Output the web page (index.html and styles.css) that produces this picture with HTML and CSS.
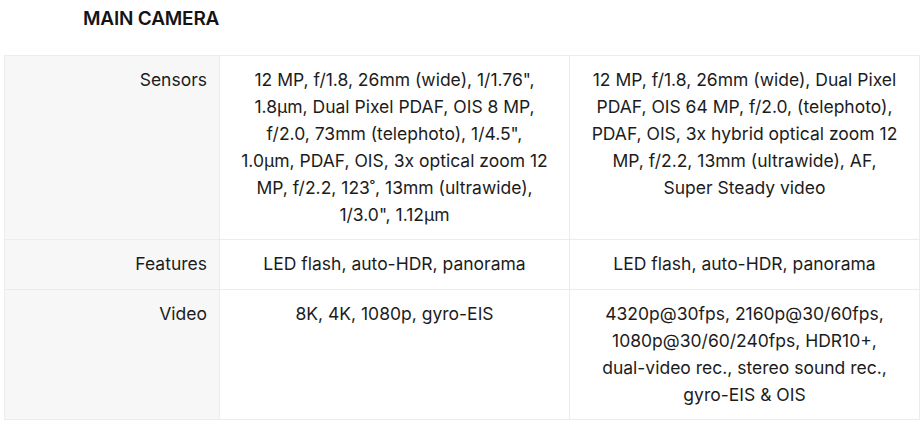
FILE: index.html
```html
<!DOCTYPE html>
<html>
<head>
<meta charset="utf-8">
<link rel="stylesheet" href="styles.css">
</head>
<body>
<div class="section">
  <h2 class="title">MAIN CAMERA</h2>
  <table class="specs">
    <colgroup>
      <col class="c-label">
      <col class="c-val">
      <col class="c-val">
    </colgroup>
    <tr>
      <th>Sensors</th>
      <td>12 MP, f/1.8, 26mm (wide), 1/1.76",<br>1.8µm, Dual Pixel PDAF, OIS 8 MP,<br>f/2.0, 73mm (telephoto), 1/4.5",<br>1.0µm, PDAF, OIS, 3x optical zoom 12<br>MP, f/2.2, 123˚, 13mm (ultrawide),<br>1/3.0", 1.12µm</td>
      <td>12 MP, f/1.8, 26mm (wide), Dual Pixel<br>PDAF, OIS 64 MP, f/2.0, (telephoto),<br>PDAF, OIS, 3x hybrid optical zoom 12<br>MP, f/2.2, 13mm (ultrawide), AF,<br>Super Steady video</td>
    </tr>
    <tr class="single">
      <th>Features</th>
      <td>LED flash, auto-HDR, panorama</td>
      <td>LED flash, auto-HDR, panorama</td>
    </tr>
    <tr>
      <th>Video</th>
      <td>8K, 4K, 1080p, gyro-EIS</td>
      <td>4320p@30fps, 2160p@30/60fps,<br>1080p@30/60/240fps, HDR10+,<br>dual-video rec., stereo sound rec.,<br>gyro-EIS &amp; OIS</td>
    </tr>
  </table>
</div>
</body>
</html>
```
FILE: styles.css
```css
html, body {
  margin: 0;
  padding: 0;
  background: #ffffff;
}
body {
  font-family: Inter, "Liberation Sans", sans-serif;
  color: #1c1c1c;
}
.section {
  padding: 4px 4px 0 4px;
}
.title {
  margin: 0 0 0 79px;
  font-size: 19px;
  font-weight: 600;
  line-height: 30px;
  height: 51px;
  letter-spacing: -0.2px;
  color: #141414;
}
.specs {
  border-collapse: collapse;
  width: 916px;
  table-layout: fixed;
  font-size: 17.5px;
  line-height: 27px;
}
.c-label { width: 215px; }
.c-val { width: 350px; }
.specs th,
.specs td {
  border: 1px solid #ececec;
  padding: 10px 12px 11px 12px;
  vertical-align: top;
  font-weight: 400;
}
.specs .single th,
.specs .single td {
  padding-bottom: 12px;
}
.specs th {
  background: #f7f7f7;
  text-align: right;
}
.specs td {
  text-align: center;
  background: #ffffff;
}
```
